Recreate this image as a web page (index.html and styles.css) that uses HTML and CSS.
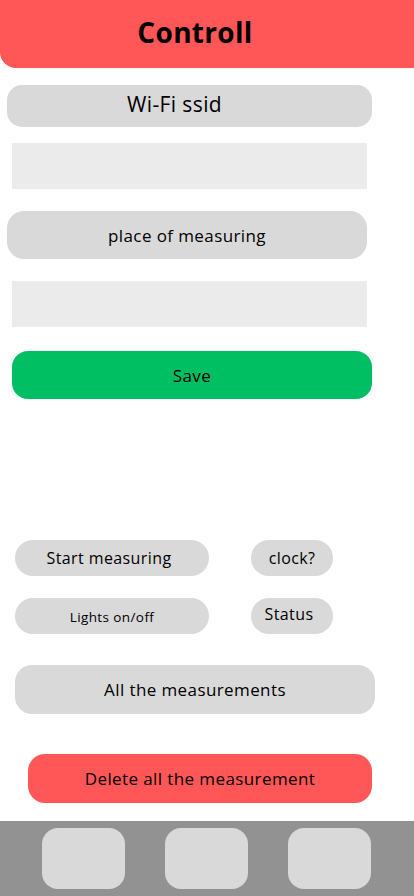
FILE: index.html
```html
<!DOCTYPE html>
<html>
<head>
<meta charset="utf-8">
<link rel="stylesheet" href="styles.css">
</head>
<body>
<div class="page">
  <header class="header"><h1 class="title">Controll</h1></header>
  <main class="main">
    <div class="pill label-wifi">Wi-Fi ssid</div>
    <div class="field field-1"></div>
    <div class="pill label-place">place of measuring</div>
    <div class="field field-2"></div>
    <div class="btn save">Save</div>
    <div class="grid">
      <div class="chip chip-wide start">Start measuring</div>
      <div class="chip chip-small">clock?</div>
      <div class="chip chip-wide small-text">Lights on/off</div>
      <div class="chip chip-small status">Status</div>
    </div>
    <div class="btn all">All the measurements</div>
    <div class="btn delete">Delete all the measurement</div>
  </main>
  <nav class="tabbar">
    <div class="tab"></div>
    <div class="tab"></div>
    <div class="tab"></div>
  </nav>
</div>
</body>
</html>
```

FILE: styles.css
```css
* { box-sizing: border-box; }
html, body { margin: 0; padding: 0; background: #ffffff; }
body {
  font-family: "Open Sans", "Noto Sans", "Liberation Sans", sans-serif;
  color: #000;
  letter-spacing: 0.4px;
}
.page {
  width: 414px;
  height: 896px;
  display: flex;
  flex-direction: column;
  overflow: hidden;
}
.header {
  height: 68px;
  background: #ff5757;
  border-bottom-left-radius: 16px;
  display: flex;
  align-items: center;
  justify-content: center;
  padding-right: 24px;
}
.title {
  margin: 0;
  font-size: 28px;
  font-weight: 700;
  letter-spacing: 0.3px;
  line-height: 1;
  margin-top: -4px;
}
.main {
  flex: 1;
  display: flex;
  flex-direction: column;
}
.pill {
  background: #d9d9d9;
  display: flex;
  align-items: center;
  justify-content: center;
}
.label-wifi {
  margin: 17px 0 0 7px;
  width: 365px;
  height: 42px;
  border-radius: 15px;
  font-size: 21px;
  padding-right: 30px;
  padding-bottom: 4px;
}
.field {
  background: #ebebeb;
  margin-left: 12px;
  width: 355px;
  height: 46px;
}
.field-1 { margin-top: 16px; }
.label-place {
  margin: 22px 0 0 7px;
  width: 360px;
  height: 48px;
  border-radius: 17px;
  font-size: 17px;
}
.field-2 { margin-top: 22px; }
.btn {
  display: flex;
  align-items: center;
  justify-content: center;
  font-size: 17px;
}
.save {
  margin: 24px 0 0 12px;
  width: 360px;
  height: 48px;
  border-radius: 16px;
  background: #00bf63;
}
.grid {
  margin: 141px 0 0 15px;
  display: grid;
  grid-template-columns: 194px 82px;
  column-gap: 42px;
  row-gap: 22px;
}
.chip {
  height: 36px;
  border-radius: 18px;
  background: #d9d9d9;
  display: flex;
  align-items: center;
  justify-content: center;
  font-size: 16px;
}
.start { padding-right: 6px; }
.small-text { font-size: 13.5px; padding-top: 2px; }
.status { padding-bottom: 4px; padding-right: 6px; }
.all {
  margin: 31px 0 0 15px;
  width: 360px;
  height: 49px;
  border-radius: 17px;
  background: #d9d9d9;
}
.delete {
  margin: 40px 0 0 28px;
  width: 344px;
  height: 49px;
  border-radius: 17px;
  background: #ff5757;
}
.tabbar {
  height: 75px;
  background: #929292;
  display: flex;
  align-items: center;
  padding-left: 42px;
  gap: 40px;
}
.tab {
  width: 83px;
  height: 61px;
  border-radius: 16px;
  background: #d9d9d9;
}
```
